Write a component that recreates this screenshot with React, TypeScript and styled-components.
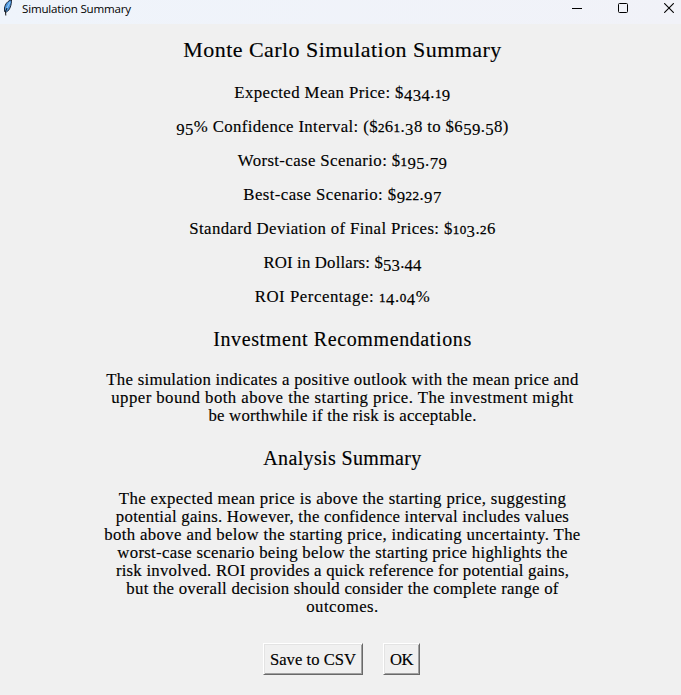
import React from 'react';
import styled, { createGlobalStyle } from 'styled-components';

const GlobalStyle = createGlobalStyle`
  * { box-sizing: border-box; }
  body { margin: 0; background: #f0f0f0; }
`;

const Window = styled.div`
  width: 681px;
  height: 695px;
  overflow: hidden;
  display: flex;
  flex-direction: column;
  background: #f0f0f0;
  color: #000;
  font-family: Georgia, "Liberation Serif", serif;
`;

const TitleBar = styled.header`
  height: 24px;
  flex: none;
  display: flex;
  align-items: flex-start;
  justify-content: space-between;
  background: linear-gradient(90deg, #eff4fb, #f1f2f8);
`;

const Caption = styled.div`
  display: flex;
  gap: 6px;
  padding-left: 2px;
`;

const CaptionText = styled.span`
  font: 11.6px/18px "Open Sans", sans-serif;
  letter-spacing: -0.2px;
  white-space: nowrap;
`;

const WindowControls = styled.div`
  display: flex;
  gap: 36px;
  padding: 3px 7px 0 0;
`;

const Content = styled.main`
  display: flex;
  flex-direction: column;
  align-items: center;
  padding: 13px 0 0 4px;
  -webkit-text-stroke: 0.15px #000;
`;

const Title = styled.h1`
  margin: 0;
  font-size: 22px;
  font-weight: 400;
  line-height: 26px;
`;

const Metrics = styled.div`
  display: flex;
  flex-direction: column;
  align-items: center;
  gap: 16px;
  margin-top: 21px;
`;

const SectionTitle = styled.h2`
  margin: 22px 0 21px;
  font-size: 20px;
  font-weight: 400;
  line-height: 22px;
`;

const Paragraph = styled.div`
  display: flex;
  flex-direction: column;
  align-items: center;
`;

const TextLine = styled.div<{ $tracking: number }>`
  height: 18px;
  font-size: 16.8px;
  line-height: 18px;
  white-space: nowrap;
  letter-spacing: ${(p) => p.$tracking}px;
`;

const Tracked = styled.span<{ $tracking: number }>`
  letter-spacing: ${(p) => p.$tracking}px;
`;

/* Old-style numerals: 0-2 sit at x-height, 3/4/5/7/9 hang below the baseline. */
const Digit = styled.span<{ $small: boolean; $low: boolean }>`
  display: inline-block;
  line-height: 0;
  font-size: ${(p) => (p.$small ? '0.78em' : '1em')};
  vertical-align: ${(p) => (p.$low ? '-3px' : 'baseline')};
  -webkit-text-stroke: ${(p) => (p.$small ? '0.3px #000' : '0.15px #000')};
`;

const Buttons = styled.div`
  display: flex;
  gap: 20px;
  margin: 27px 2px 0 0;
`;

const Button = styled.button<{ $width: number; $tracking: number }>`
  width: ${(p) => p.$width}px;
  height: 32px;
  padding: 1px 0 0;
  border: 1px solid;
  border-color: #fff #696969 #696969 #fff;
  box-shadow: inset 1px 1px #e3e3e3, inset -1px -1px #a0a0a0;
  background: #f0f0f0;
  color: #000;
  font: 16.6px/28px Georgia, "Liberation Serif", serif;
  letter-spacing: ${(p) => p.$tracking}px;
  white-space: nowrap;
`;

const withNumerals = (text: string) =>
  text.split(/(\d)/).map((part, i) =>
    /^\d$/.test(part) ? (
      <Digit key={i} $small={'012'.includes(part)} $low={'34579'.includes(part)}>
        {part}
      </Digit>
    ) : (
      part
    ),
  );

type Line = [text: string, tracking: number];

const metrics: Line[] = [
  ['Expected Mean Price: $434.19', 0.4],
  ['95% Confidence Interval: ($261.38 to $659.58)', 0.375],
  ['Worst-case Scenario: $195.79', 0.385],
  ['Best-case Scenario: $922.97', 0.425],
  ['Standard Deviation of Final Prices: $103.26', 0.38],
  ['ROI in Dollars: $53.44', 0.154],
  ['ROI Percentage: 14.04%', 0.54],
];

const recommendation: Line[] = [
  ['The simulation indicates a positive outlook with the mean price and', 0.26],
  ['upper bound both above the starting price. The investment might', 0.436],
  ['be worthwhile if the risk is acceptable.', 0.216],
];

const analysis: Line[] = [
  ['The expected mean price is above the starting price, suggesting', 0.355],
  ['potential gains. However, the confidence interval includes values', 0.252],
  ['both above and below the starting price, indicating uncertainty. The', 0.344],
  ['worst-case scenario being below the starting price highlights the', 0.289],
  ['risk involved. ROI provides a quick reference for potential gains,', 0.237],
  ['but the overall decision should consider the complete range of', 0.245],
  ['outcomes.', 0.436],
];

const Lines = ({ lines }: { lines: Line[] }) => (
  <>
    {lines.map(([text, tracking]) => (
      <TextLine key={text} $tracking={tracking}>
        {withNumerals(text)}
      </TextLine>
    ))}
  </>
);

const FeatherIcon = () => (
  <svg width="14" height="17" viewBox="0 0 14 17" fill="none">
    <path d="M9.5 0 C6 0.5 3 4 2.5 8 L2.5 11.5 L4.5 12 C8 10 9.5 5 9.5 0Z" fill="#4b94dc" stroke="#111a28" strokeWidth="0.9" />
    <path d="M8 2 L4.3 9.5" stroke="#8cc4f4" strokeWidth="1.2" />
    <path d="M5 8 L3.5 11.5 L3.8 15.5" stroke="#111" strokeWidth="1" />
  </svg>
);

export default function App() {
  return (
    <>
      <GlobalStyle />
      <Window>
        <TitleBar>
          <Caption>
            <FeatherIcon />
            <CaptionText>Simulation Summary</CaptionText>
          </Caption>
          <WindowControls>
            <svg width="10" height="11" viewBox="0 0 10 11">
              <path d="M0 5.5H10" stroke="#000" />
            </svg>
            <svg width="10" height="10" viewBox="0 0 10 10">
              <rect x="0.5" y="0.5" width="9" height="9" rx="1" fill="none" stroke="#000" />
            </svg>
            <svg width="10" height="10" viewBox="0 0 10 10">
              <path d="M0.2 0.2L9.8 9.8M9.8 0.2L0.2 9.8" stroke="#000" strokeWidth="1.1" />
            </svg>
          </WindowControls>
        </TitleBar>
        <Content>
          <Title>
            <Tracked $tracking={0.45}>Monte Carlo Simulation Summary</Tracked>
          </Title>
          <Metrics>
            <Lines lines={metrics} />
          </Metrics>
          <SectionTitle>
            <Tracked $tracking={0.611}>Investment Recommendations</Tracked>
          </SectionTitle>
          <Paragraph>
            <Lines lines={recommendation} />
          </Paragraph>
          <SectionTitle>
            <Tracked $tracking={0.348}>Analysis Summary</Tracked>
          </SectionTitle>
          <Paragraph>
            <Lines lines={analysis} />
          </Paragraph>
          <Buttons>
            <Button type="button" $width={100} $tracking={0.03}>
              Save to CSV
            </Button>
            <Button type="button" $width={37} $tracking={-0.6}>
              OK
            </Button>
          </Buttons>
        </Content>
      </Window>
    </>
  );
}
